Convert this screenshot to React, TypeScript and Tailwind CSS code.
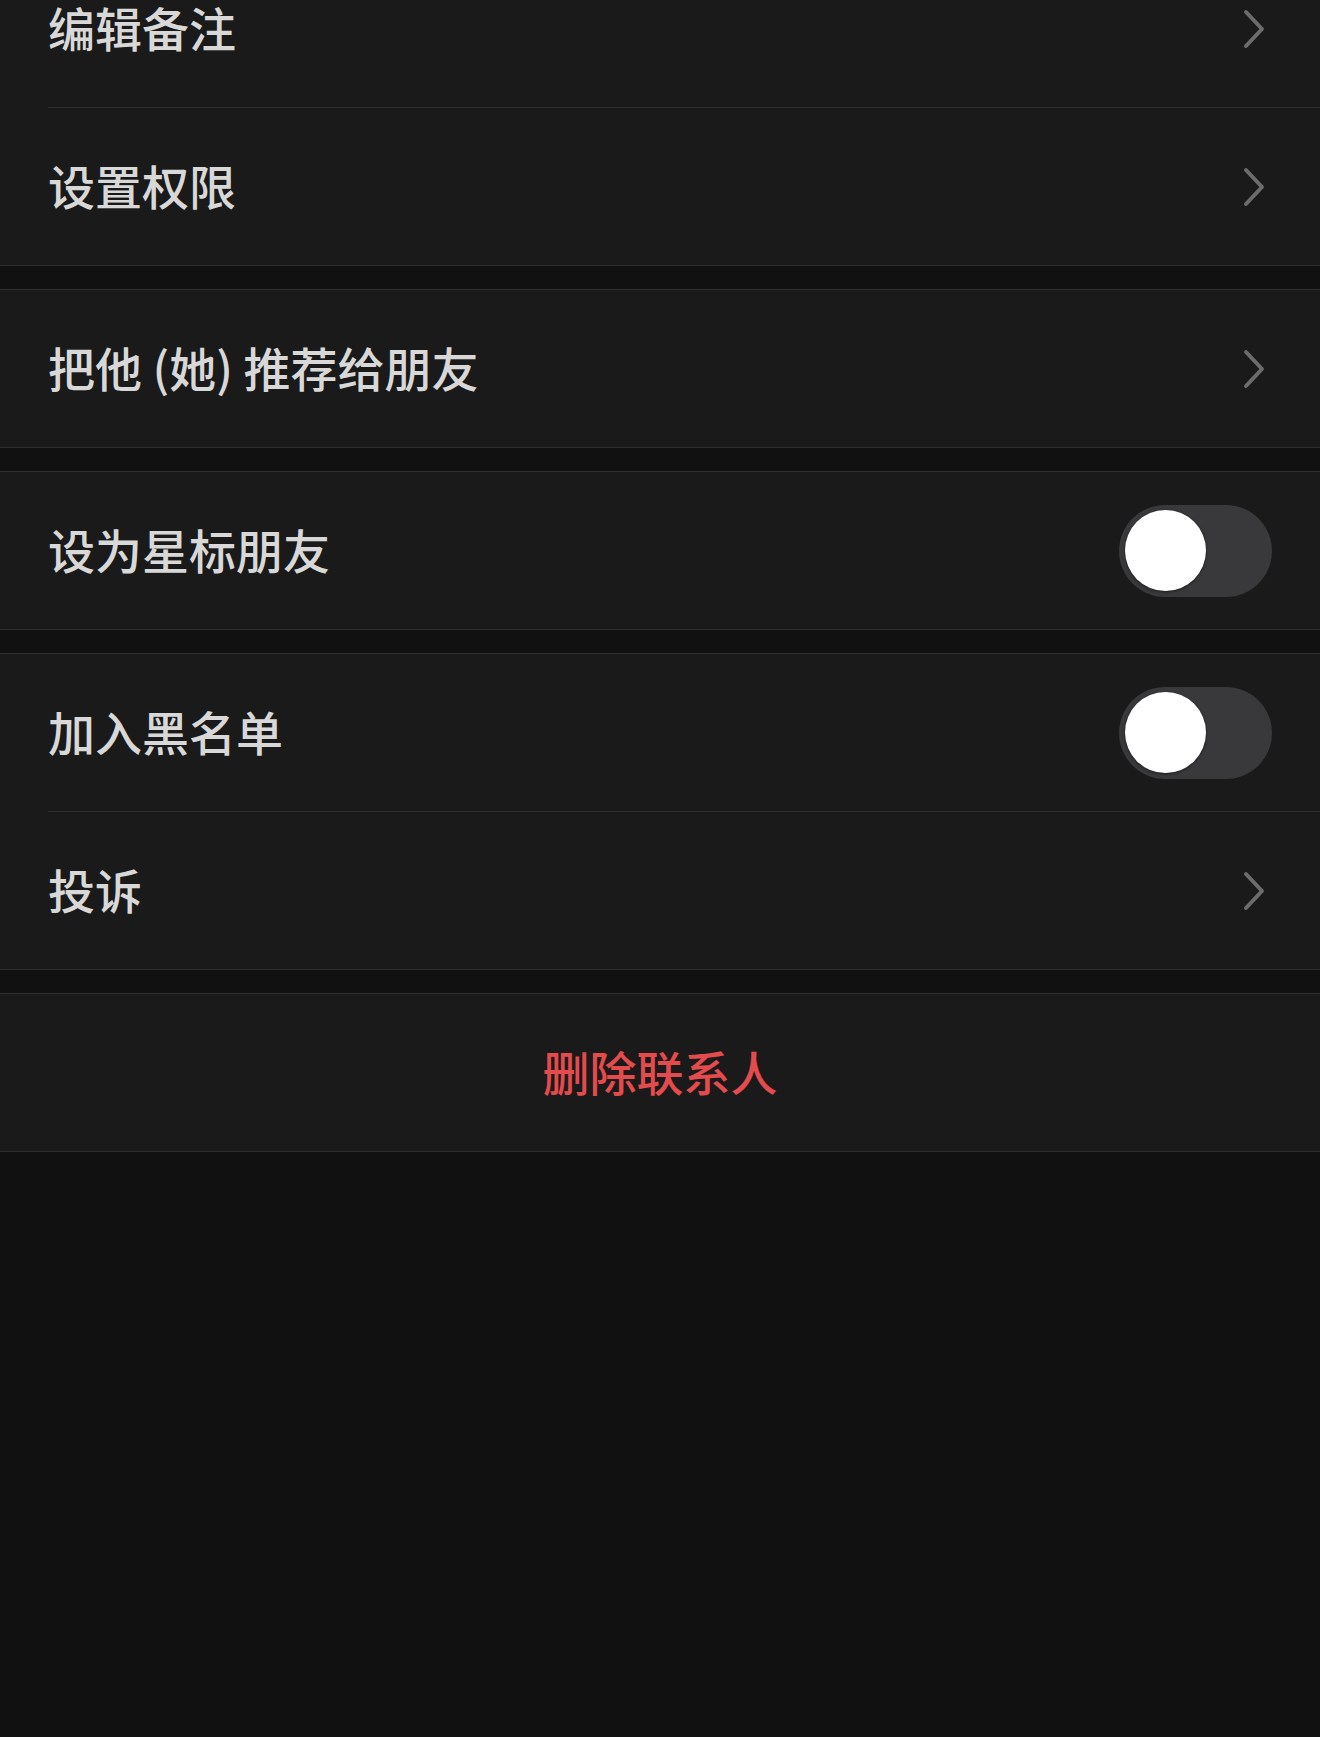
import React from "react";

const FONT = { fontFamily: '"Noto Sans CJK SC", "Noto Sans", sans-serif' };

function Chevron() {
  return (
    <svg width="22" height="40" viewBox="0 0 22 40" className="shrink-0">
      <polyline
        points="3,3 19,20 3,37"
        fill="none"
        stroke="#6c6c6c"
        strokeWidth="4"
        strokeLinecap="round"
        strokeLinejoin="round"
      />
    </svg>
  );
}

function Toggle() {
  return (
    <div className="w-[153px] h-[92px] rounded-full bg-[#39393c] flex items-center pl-[6px] shrink-0">
      <div className="w-[81px] h-[81px] rounded-full bg-white shadow-[0_1px_3px_rgba(0,0,0,0.5)]" />
    </div>
  );
}

function Row({ label, right }: { label: string; right: "chevron" | "toggle" }) {
  return (
    <div className="h-[157px] flex items-center justify-between pl-[48px] pr-[48px]">
      <span className="text-[47px] leading-none font-medium text-[#d8d8d8] mb-[5px]">{label}</span>
      {right === "chevron" ? (
        <div className="pr-[7px]">
          <Chevron />
        </div>
      ) : (
        <Toggle />
      )}
    </div>
  );
}

function Separator() {
  return <div className="ml-[48px] h-px bg-[#2f2f2f]" />;
}

function Section({ children, className = "" }: { children: React.ReactNode; className?: string }) {
  return (
    <div className={"bg-[#1a1a1a] border-y border-[#2e2e2e] " + className}>{children}</div>
  );
}

export default function App() {
  return (
    <div className="w-full min-h-[1737px] bg-[#111111] overflow-hidden" style={FONT}>
      <div className="-mt-[51px] flex flex-col gap-[23px]">
        <Section>
          <Row label="编辑备注" right="chevron" />
          <Separator />
          <Row label="设置权限" right="chevron" />
        </Section>
        <Section>
          <Row label="把他 (她) 推荐给朋友" right="chevron" />
        </Section>
        <Section>
          <Row label="设为星标朋友" right="toggle" />
        </Section>
        <Section>
          <Row label="加入黑名单" right="toggle" />
          <Separator />
          <Row label="投诉" right="chevron" />
        </Section>
        <Section>
          <div className="h-[157px] flex items-center justify-center">
            <span className="text-[47px] leading-none font-medium text-[#e34b4d] mb-[5px]">删除联系人</span>
          </div>
        </Section>
      </div>
    </div>
  );
}
